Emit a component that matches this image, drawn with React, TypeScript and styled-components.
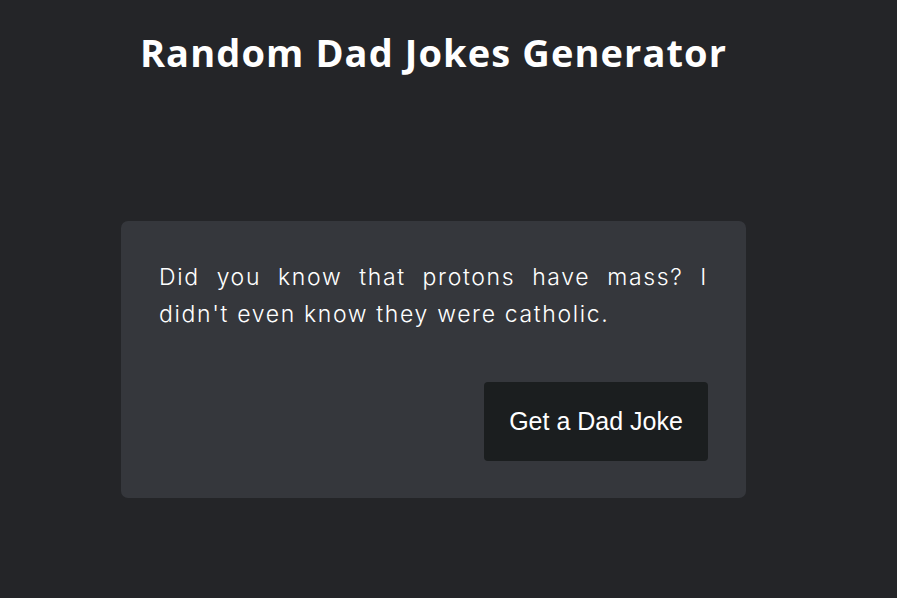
import styled, { createGlobalStyle } from 'styled-components';

const GlobalStyle = createGlobalStyle`
  html, body {
    margin: 0;
    padding: 0;
    background: #242528;
  }
`;

export default function App() {
  return (
    <>
      <GlobalStyle />
      <Page>
        <Title>Random Dad Jokes Generator</Title>
        <Card>
          <Joke>Did you know that protons have mass? I didn't even know they were catholic.</Joke>
          <Actions>
            <JokeButton>Get a Dad Joke</JokeButton>
          </Actions>
        </Card>
      </Page>
    </>
  );
}

const Page = styled.div`
  width: 625px;
  margin-left: 121px;
  min-height: 598px;
  display: flex;
  flex-direction: column;
  align-items: stretch;
`;

const Title = styled.h1`
  margin: 28px 0 0;
  font-family: 'Open Sans', sans-serif;
  font-size: 38px;
  font-weight: 700;
  letter-spacing: 1.1px;
  line-height: 48px;
  color: #ffffff;
  text-align: center;
  white-space: nowrap;
`;

const Card = styled.div`
  margin-top: 145px;
  padding: 38px 38px 37px;
  background: #35373c;
  border-radius: 7px;
  display: flex;
  flex-direction: column;
`;

const Joke = styled.p`
  margin: 0;
  font-family: Inter, 'Open Sans', sans-serif;
  font-size: 23px;
  font-weight: 300;
  letter-spacing: 1.65px;
  line-height: 37px;
  color: #ffffff;
  text-align: justify;
`;

const Actions = styled.div`
  display: flex;
  justify-content: flex-end;
  margin-top: 49px;
`;

const JokeButton = styled.button`
  width: 224px;
  height: 79px;
  border: none;
  border-radius: 4px;
  background: #1b1e1f;
  color: #ffffff;
  font-family: 'Liberation Sans', Arial, sans-serif;
  font-size: 25px;
  cursor: pointer;
`;
